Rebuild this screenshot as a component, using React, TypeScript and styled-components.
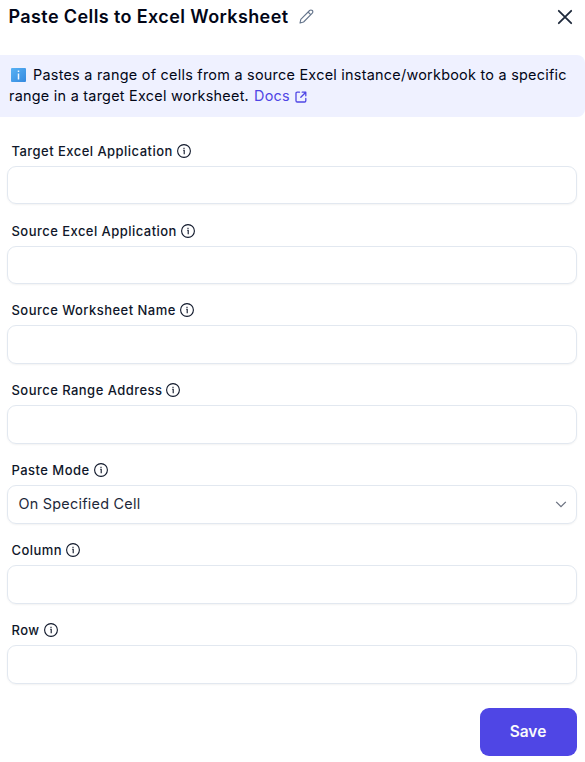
import React from 'react';
import styled, { createGlobalStyle } from 'styled-components';

const Global = createGlobalStyle`
  * { box-sizing: border-box; }
  body { margin: 0; background: #fff; font-family: Inter, "Liberation Sans", sans-serif; color: #0f172a; overflow: hidden; }
`;
const Panel = styled.main`
  width: 585px; height: 762px; display: flex; flex-direction: column;
`;
const Header = styled.header`
  height: 55px; padding: 0 12px 0 8.5px; display: flex; align-items: flex-start; justify-content: space-between;
`;
const TitleGroup = styled.div`
  display: flex; align-items: center; gap: 10.5px; height: 33px;
`;
const Title = styled.h1`
  margin: 0; color: #020617; font-size: 18px; font-weight: 600; line-height: 28px; letter-spacing: 0.39px; white-space: nowrap;
`;
const IconButton = styled.button`
  border: 0; padding: 0; background: none; color: #1e293b; display: flex; align-items: center; height: 34px;
`;
const Banner = styled.section`
  height: 62px; padding: 9px 9px; border-radius: 0 8px 8px 0; background: #eff1ff; color: #020617; font-size: 14.4px; line-height: 21px; letter-spacing: 0.26px; white-space: nowrap;
`;
const Line = styled.div`
  display: flex; align-items: center; height: 21px;
`;
const InfoBadge = styled.span`
  display: flex; margin: 0 7px 0 2px;
`;
const DocsLink = styled.a`
  color: #4f46e5; display: inline-flex; align-items: center; gap: 5px; margin-left: 5px;

  svg { margin-top: 2px; }
`;
const Form = styled.form`
  flex: 1; padding: 22.7px 8px 0 7px; display: flex; flex-direction: column;
`;
const Field = styled.div`
  height: 79.87px; flex: none;
`;
const Label = styled.label`
  height: 22px; margin: 0 0 4px 4.5px; display: flex; align-items: center; gap: 4px; font-size: 13px; font-weight: 500; letter-spacing: 0.46px;
`;
const Control = styled.div`
  height: 38.7px; border: 1px solid #e2e8f0; border-radius: 9px; padding: 0 8.5px 1px 10.5px; display: flex; align-items: center; justify-content: space-between; color: #1e293b; font-size: 14.4px; letter-spacing: 0.25px; box-shadow: 0 1px 2px rgba(0,0,0,.05);
`;
const Save = styled.button`
  align-self: flex-end; width: 97px; height: 48px; margin-top: 9px; padding: 0 1px 0 0; border: 0; border-radius: 9px; background: #4f46e5; color: #f8fafc; font: 600 15.5px Inter, sans-serif;
`;

const InfoIcon = () => (
  <svg width="14" height="14" viewBox="0 0 14 14" fill="none" stroke="currentColor" strokeWidth="1.1">
    <circle cx="7" cy="7" r="6.4" /><path d="M6.2 6.2h1v4M7 3.8v1.2" />
  </svg>
);
const PencilIcon = () => (
  <svg width="15" height="15" viewBox="0 0 15 15" fill="none" stroke="#64748b" strokeWidth="1.1" strokeLinejoin="round">
    <path d="M1 14l.8-3.7L10.6 1.5a1.8 1.8 0 0 1 2.7 2.7L4.6 13 1 14zM9.1 3l2.8 2.8" />
  </svg>
);
const ExternalIcon = () => (
  <svg width="12" height="12" viewBox="0 0 12 12" fill="none" stroke="currentColor" strokeWidth="1.3" strokeLinecap="round" strokeLinejoin="round">
    <path d="M4.5 1.2H2.2Q1 1.2 1 2.4v7.4Q1 11 2.2 11h7.4Q10.8 11 10.8 9.8V7.5M7.2 1.2h3.6v3.6M10.8 1.2L5.8 6.2" />
  </svg>
);
const InfoSquare = () => (
  <svg width="15" height="14" viewBox="0 0 15 14">
    <defs><linearGradient id="badge" x1="0" y1="0" x2="1" y2="1"><stop stopColor="#58b2f4" /><stop offset="1" stopColor="#3489df" /></linearGradient></defs>
    <rect width="15" height="14" rx="1" fill="url(#badge)" /><path d="M7.5 5.5v6M7.5 2.5v1.6" fill="none" stroke="#f0f7ff" strokeWidth="1.5" />
  </svg>
);
const Chevron = () => (
  <svg width="14" height="14" viewBox="0 0 14 14" fill="none" stroke="#6b7280" strokeWidth="1.3"><path d="M2.2 4.9L7 9.7l4.8-4.8" /></svg>
);
const fields = ['Target Excel Application', 'Source Excel Application', 'Source Worksheet Name', 'Source Range Address', 'Paste Mode', 'Column', 'Row'];

export default function App() {
  return (
    <Panel>
      <Global />
      <Header>
        <TitleGroup><Title>Paste Cells to Excel Worksheet</Title><PencilIcon /></TitleGroup>
        <IconButton aria-label="Close"><svg width="16" height="16" viewBox="0 0 16 16" stroke="currentColor" strokeWidth="1.8" strokeLinecap="round"><path d="M1.8 1.8l12.4 12.4M14.2 1.8L1.8 14.2" /></svg></IconButton>
      </Header>
      <Banner>
        <Line><InfoBadge><InfoSquare /></InfoBadge>Pastes a range of cells from a source Excel instance/workbook to a specific</Line>
        <Line>range in a target Excel worksheet.<DocsLink>Docs<ExternalIcon /></DocsLink></Line>
      </Banner>
      <Form>
        {fields.map(name => (
          <Field key={name}>
            <Label>{name}<InfoIcon /></Label>
            <Control>{name === 'Paste Mode' && <><span>On Specified Cell</span><Chevron /></>}</Control>
          </Field>
        ))}
        <Save type="button">Save</Save>
      </Form>
    </Panel>
  );
}
